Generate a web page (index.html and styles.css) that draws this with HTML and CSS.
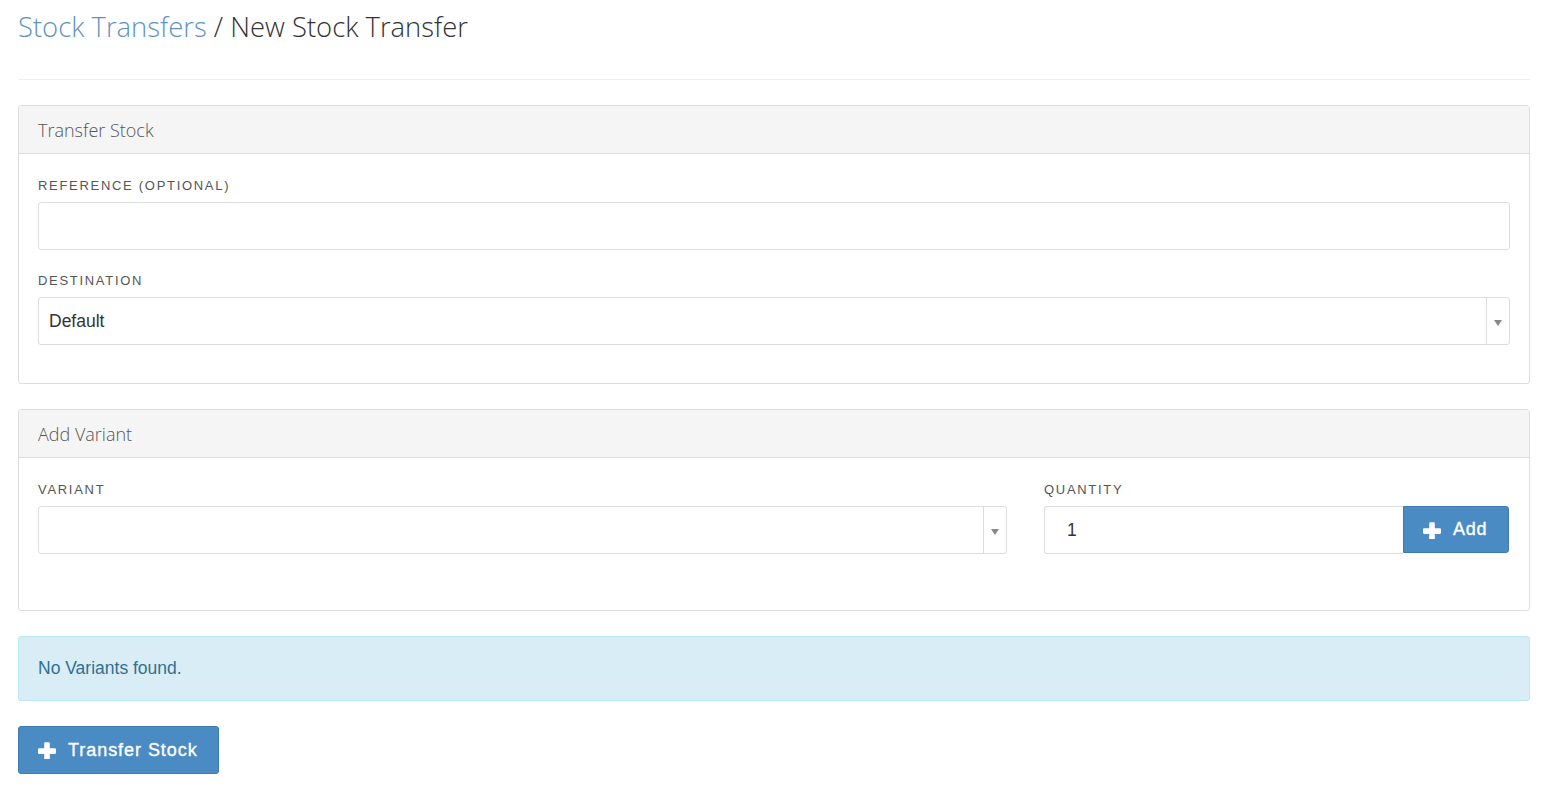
FILE: index.html
```html
<!DOCTYPE html>
<html>
<head>
<meta charset="utf-8">
<link rel="stylesheet" href="styles.css">
</head>
<body>
<div class="page">
  <h1 class="title"><a class="crumb" href="#">Stock Transfers</a> / New Stock Transfer</h1>
  <hr class="rule">
  <div class="panel">
    <div class="panel-head">Transfer Stock</div>
    <div class="panel-body">
      <div class="field">
        <label class="label">Reference (optional)</label>
        <div class="input"></div>
      </div>
      <div class="field">
        <label class="label">Destination</label>
        <div class="input select"><span class="sel-text">Default</span><span class="arrow"><span class="tri"></span></span></div>
      </div>
    </div>
  </div>
  <div class="panel">
    <div class="panel-head">Add Variant</div>
    <div class="panel-body body2">
      <div class="cols">
        <div class="field">
          <label class="label">Variant</label>
          <div class="input select"><span class="sel-text"></span><span class="arrow"><span class="tri"></span></span></div>
        </div>
        <div class="field">
          <label class="label">Quantity</label>
          <div class="group">
            <div class="input qty">1</div>
            <button class="btn btn-add"><svg class="plus" viewBox="0 0 16 16"><path d="M6.5 1h3a1 1 0 0 1 1 1v4.5h4.5a1 1 0 0 1 1 1v3a1 1 0 0 1-1 1h-4.5v4.5a1 1 0 0 1-1 1h-3a1 1 0 0 1-1-1v-4.5h-4.5a1 1 0 0 1-1-1v-3a1 1 0 0 1 1-1h4.5v-4.5a1 1 0 0 1 1-1z" fill="#fff"/></svg>Add</button>
          </div>
        </div>
      </div>
    </div>
  </div>
  <div class="alert">No Variants found.</div>
  <button class="btn btn-main"><svg class="plus" viewBox="0 0 16 16"><path d="M6.5 1h3a1 1 0 0 1 1 1v4.5h4.5a1 1 0 0 1 1 1v3a1 1 0 0 1-1 1h-4.5v4.5a1 1 0 0 1-1 1h-3a1 1 0 0 1-1-1v-4.5h-4.5a1 1 0 0 1-1-1v-3a1 1 0 0 1 1-1h4.5v-4.5a1 1 0 0 1 1-1z" fill="#fff"/></svg>Transfer Stock</button>
</div>
</body>
</html>
```

FILE: styles.css
```css
html, body { margin: 0; padding: 0; background: #fff; }
body { font-family: "Liberation Sans", Arial, sans-serif; color: #333; }
.page { padding: 0 26px 0 18px; }
.title {
  margin: 0;
  padding-top: 8px;
  font-family: "Open Sans", sans-serif;
  font-weight: 300;
  font-size: 27.4px;
  line-height: 38px;
  color: #333;
}
.crumb { color: #5f93c4; text-decoration: none; }
.rule { border: 0; border-top: 1px solid #eee; margin: 33px 0 25px; height: 0; }
.panel { border: 1px solid #ddd; border-radius: 3px; margin-bottom: 25px; }
.panel-head {
  background: #f5f5f5;
  border-bottom: 1px solid #ddd;
  height: 47px;
  line-height: 49px;
  padding: 0 19px;
  font-family: "Open Sans", sans-serif;
  font-weight: 300;
  font-size: 18px;
  color: #555;
}
.panel-body { padding: 23px 19px 16px; }
.body2 { padding-bottom: 34px; }
.field { margin-bottom: 22px; }
.cols { display: grid; grid-template-columns: 969px 1fr; column-gap: 37px; }
.label {
  display: block;
  font-size: 13px;
  letter-spacing: 1.7px;
  text-transform: uppercase;
  color: #555;
  line-height: 18px;
  margin-bottom: 7px;
}
.input {
  box-sizing: border-box;
  height: 48px;
  border: 1px solid #ddd;
  border-radius: 3px;
  background: #fff;
  font-size: 17.5px;
  line-height: 46px;
  color: #333;
}
.select { display: flex; }
.sel-text { flex: 1; padding-left: 10px; }
.arrow {
  width: 22px;
  border-left: 1px solid #ddd;
  display: flex;
  align-items: center;
  justify-content: center;
}
.tri {
  width: 0; height: 0;
  border-left: 4px solid transparent;
  border-right: 4px solid transparent;
  border-top: 6px solid #888;
  margin-top: 4px;
}
.group { display: flex; }
.qty { flex: 1; padding-left: 22px; border-radius: 3px 0 0 3px; border-right: 0; }
.btn {
  border: 1px solid #3d7bb1;
  background: #4a8bc4;
  color: #fff;
  font-family: "Liberation Sans", Arial, sans-serif;
  font-size: 18px;
  letter-spacing: 0.95px;
  -webkit-text-stroke: 0.35px #fff;
  border-radius: 3px;
  display: flex;
  align-items: center;
  padding: 0;
  cursor: pointer;
}
.plus { width: 18px; height: 18px; margin-right: 12px; }
.btn-add { width: 106px; height: 47px; padding-left: 19px; border-radius: 0 3px 3px 0; margin-right: 1px; letter-spacing: 0.7px; }
.alert {
  box-sizing: border-box;
  height: 65px;
  background: #d9edf7;
  border: 1px solid #bce8f1;
  border-radius: 3px;
  color: #31708f;
  font-size: 17.5px;
  line-height: 63px;
  padding-left: 19px;
  margin-bottom: 25px;
}
.btn-main { height: 48px; width: 201px; padding-left: 19px; }
```
